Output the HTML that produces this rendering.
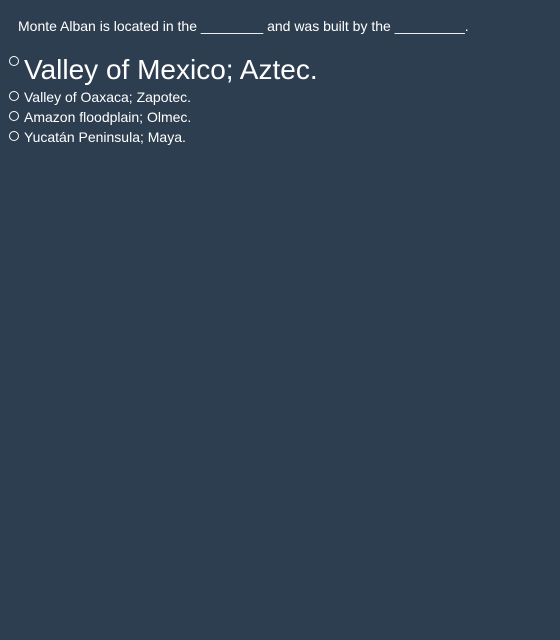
<!DOCTYPE html>
<html><head><style>
body{margin:0;background:#2d3e50;width:560px;height:640px;font-family:"Liberation Sans",sans-serif;color:#fff;position:relative;overflow:hidden}
.q{position:absolute;left:18px;top:18px;font-size:14px}
.r{position:absolute;width:10px;height:10px;border:1px solid #fff;border-radius:50%;box-sizing:border-box}
.t{position:absolute;left:24px;font-size:14px;white-space:nowrap}
</style></head><body>
<div class="q">Monte Alban is located in the ________ and was built by the _________.</div>
<div class="r" style="left:9px;top:56px"></div>
<div class="t" style="font-size:28px;top:54px">Valley of Mexico; Aztec.</div>
<div class="r" style="left:9px;top:91px"></div>
<div class="t" style="top:89px">Valley of Oaxaca; Zapotec.</div>
<div class="r" style="left:9px;top:111px"></div>
<div class="t" style="top:109px">Amazon floodplain; Olmec.</div>
<div class="r" style="left:9px;top:131px"></div>
<div class="t" style="top:129px">Yucatán Peninsula; Maya.</div>
</body></html>
